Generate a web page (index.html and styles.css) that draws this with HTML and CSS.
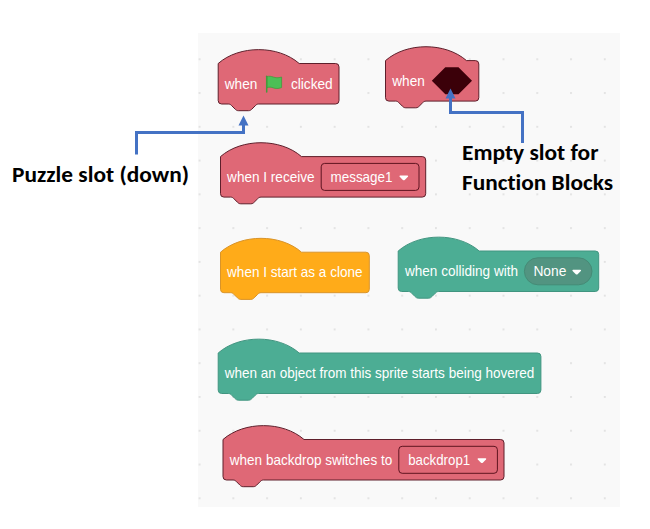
FILE: index.html
```
<!DOCTYPE html>
<html lang="en">
<head>
<meta charset="utf-8">
<title>Hat blocks</title>
<link rel="stylesheet" href="styles.css">
</head>
<body>
<svg class="canvas" width="650" height="529" viewBox="0 0 650 529">
  <defs>
    <pattern id="grid" x="198.6" y="58.3" width="33.77" height="33.77" patternUnits="userSpaceOnUse">
      <rect class="dot" width="1.9" height="1.9"/>
    </pattern>
    <path id="caret" d="M.8 0H8.2Q9.4.2 8.6 1.3L5.4 4.5Q4.5 5.1 3.6 4.5L.4 1.3Q-.4.2.8 0Z"/>
  </defs>
  <rect class="workspace" x="198" y="33" width="422" height="474"/>
  <rect fill="url(#grid)" x="198" y="33" width="422" height="474"/>

  <g class="block event" transform="translate(218.2 63.5)">
    <path class="shape" d="M0 0C21.1-18.5 59.9-18.5 81 0H117.4a3.4 3.4 0 0 1 3.4 3.4V37.1a3.4 3.4 0 0 1-3.4 3.4H40.5c-1.7 0-2.5.8-3.4 1.7l-3.4 3.4c-.8.8-1.7 1.6-3.4 1.6H20.3c-1.7 0-2.6-.8-3.4-1.6l-3.4-3.4c-.8-.9-1.7-1.7-3.4-1.7H3.4A3.4 3.4 0 0 1 0 37.1Z"/>
    <text x="6.6" y="25.2" textLength="32.5" lengthAdjust="spacingAndGlyphs">when</text>
    <path class="flag" d="M48.6 13.3c5-2.2 7.5 2.8 14.8.2V24.1c-7.3 2.9-9.8-2.2-14.8.2Z"/>
    <path class="pole" d="M48.5 12.7V28.5"/>
    <text x="72.7" y="25.2" textLength="41.8" lengthAdjust="spacingAndGlyphs">clicked</text>
  </g>

  <g class="block event" transform="translate(385.5 60.6)">
    <path class="shape" d="M0 0C21.1-18.5 59.9-18.5 81 0H89.9a3.4 3.4 0 0 1 3.4 3.4V37.1a3.4 3.4 0 0 1-3.4 3.4H40.5c-1.7 0-2.5.8-3.4 1.7l-3.4 3.4c-.8.8-1.7 1.6-3.4 1.6H20.3c-1.7 0-2.6-.8-3.4-1.6l-3.4-3.4c-.8-.9-1.7-1.7-3.4-1.7H3.4A3.4 3.4 0 0 1 0 37.1Z"/>
    <text x="6.8" y="25.2" textLength="32.5" lengthAdjust="spacingAndGlyphs">when</text>
    <path class="slot" d="M46.3 20.2 59.8 6.7H73L86.5 20.2 73 33.7H59.8Z"/>
  </g>

  <g class="block event" transform="translate(220.5 156.6)">
    <path class="shape" d="M0 0C21.1-18.5 59.9-18.5 81 0H201.8a3.4 3.4 0 0 1 3.4 3.4V37.1a3.4 3.4 0 0 1-3.4 3.4H40.5c-1.7 0-2.5.8-3.4 1.7l-3.4 3.4c-.8.8-1.7 1.6-3.4 1.6H20.3c-1.7 0-2.6-.8-3.4-1.6l-3.4-3.4c-.8-.9-1.7-1.7-3.4-1.7H3.4A3.4 3.4 0 0 1 0 37.1Z"/>
    <text x="6.6" y="25.2" textLength="87.5" lengthAdjust="spacingAndGlyphs">when I receive</text>
    <rect class="field" x="100.7" y="6.8" width="97.8" height="27" rx="3.4"/>
    <text x="110" y="25.2" textLength="62" lengthAdjust="spacingAndGlyphs">message1</text>
    <use class="caret" href="#caret" x="178.8" y="18.8"/>
  </g>

  <g class="block control" transform="translate(220.5 252.2)">
    <path class="shape" d="M0 0C21.1-18.5 59.9-18.5 81 0H145.4a3.4 3.4 0 0 1 3.4 3.4V37.1a3.4 3.4 0 0 1-3.4 3.4H40.5c-1.7 0-2.5.8-3.4 1.7l-3.4 3.4c-.8.8-1.7 1.6-3.4 1.6H20.3c-1.7 0-2.6-.8-3.4-1.6l-3.4-3.4c-.8-.9-1.7-1.7-3.4-1.7H3.4A3.4 3.4 0 0 1 0 37.1Z"/>
    <text x="6.6" y="25.2" textLength="135.4" lengthAdjust="spacingAndGlyphs">when I start as a clone</text>
  </g>

  <g class="block sensing" transform="translate(398.2 251)">
    <path class="shape" d="M0 0C21.1-18.5 59.9-18.5 81 0H197.1a3.4 3.4 0 0 1 3.4 3.4V37.1a3.4 3.4 0 0 1-3.4 3.4H40.5c-1.7 0-2.5.8-3.4 1.7l-3.4 3.4c-.8.8-1.7 1.6-3.4 1.6H20.3c-1.7 0-2.6-.8-3.4-1.6l-3.4-3.4c-.8-.9-1.7-1.7-3.4-1.7H3.4A3.4 3.4 0 0 1 0 37.1Z"/>
    <text x="6.8" y="25.2" textLength="113" lengthAdjust="spacingAndGlyphs">when colliding with</text>
    <rect class="menu" x="126.2" y="6.8" width="67.6" height="27" rx="13.5"/>
    <text x="135.2" y="25.2" textLength="33" lengthAdjust="spacingAndGlyphs">None</text>
    <use class="caret" href="#caret" x="174" y="18.8"/>
  </g>

  <g class="block sensing" transform="translate(218.2 353)">
    <path class="shape" d="M0 0C21.1-18.5 59.9-18.5 81 0H319.3a3.4 3.4 0 0 1 3.4 3.4V37.1a3.4 3.4 0 0 1-3.4 3.4H40.5c-1.7 0-2.5.8-3.4 1.7l-3.4 3.4c-.8.8-1.7 1.6-3.4 1.6H20.3c-1.7 0-2.6-.8-3.4-1.6l-3.4-3.4c-.8-.9-1.7-1.7-3.4-1.7H3.4A3.4 3.4 0 0 1 0 37.1Z"/>
    <text x="6.6" y="25.2" textLength="309.5" lengthAdjust="spacingAndGlyphs">when an object from this sprite starts being hovered</text>
  </g>

  <g class="block event" transform="translate(223 439.5)">
    <path class="shape" d="M0 0C21.1-18.5 59.9-18.5 81 0H277.6a3.4 3.4 0 0 1 3.4 3.4V37.1a3.4 3.4 0 0 1-3.4 3.4H40.5c-1.7 0-2.5.8-3.4 1.7l-3.4 3.4c-.8.8-1.7 1.6-3.4 1.6H20.3c-1.7 0-2.6-.8-3.4-1.6l-3.4-3.4c-.8-.9-1.7-1.7-3.4-1.7H3.4A3.4 3.4 0 0 1 0 37.1Z"/>
    <text x="6.8" y="25.2" textLength="162.4" lengthAdjust="spacingAndGlyphs">when backdrop switches to</text>
    <rect class="field" x="175.8" y="6.8" width="98.6" height="27" rx="3.4"/>
    <text x="185.2" y="25.2" textLength="62" lengthAdjust="spacingAndGlyphs">backdrop1</text>
    <use class="caret" href="#caret" x="254.4" y="18.8"/>
  </g>

  <path class="connector" d="M136.5 154.5V132.5H243.5V124"/>
  <path class="arrowhead" d="M243.5 115.5 248.5 125.5H238.5Z"/>
  <path class="connector" d="M522.5 143V112.5H450.5V97"/>
  <path class="arrowhead" d="M450.5 88.5 455.5 98.5H445.5Z"/>

  <text class="note" x="12" y="181.5" textLength="177" lengthAdjust="spacingAndGlyphs">Puzzle slot (down)</text>
  <text class="note" x="462" y="160" textLength="136.5" lengthAdjust="spacingAndGlyphs">Empty slot for</text>
  <text class="note" x="462" y="190" textLength="151" lengthAdjust="spacingAndGlyphs">Function Blocks</text>
</svg>
</body>
</html>
```
FILE: styles.css
```
body {
  margin: 0;
  background: #fff;
}

.canvas {
  display: block;
}

.workspace {
  fill: #f9f9f9;
}

.dot {
  fill: #e2e2e2;
}

.block text {
  font: 14.4px "Liberation Sans", Arial, sans-serif;
  fill: #fff;
}

.shape {
  stroke-width: 1;
}

.event .shape {
  fill: #df6876;
  stroke: #5e1f2b;
}

.control .shape {
  fill: #ffab19;
  stroke: #d9942a;
}

.sensing .shape {
  fill: #4cad94;
  stroke: #419580;
}

.field {
  fill: none;
  stroke: #5e1420;
}

.menu {
  fill: #529481;
  stroke: #458b76;
}

.caret {
  fill: #fff;
}

.slot {
  fill: #3b0009;
}

.flag {
  fill: #4cbf56;
  stroke: #45993d;
  stroke-width: 0.8;
}

.pole {
  stroke: #45993d;
  stroke-width: 1.5;
  stroke-linecap: round;
}

.connector {
  fill: none;
  stroke: #4472c4;
  stroke-width: 3;
}

.arrowhead {
  fill: #4472c4;
}

.note {
  font: bold 22.5px Carlito, Lato, sans-serif;
  font-variant-ligatures: none;
  fill: #000;
}
```
